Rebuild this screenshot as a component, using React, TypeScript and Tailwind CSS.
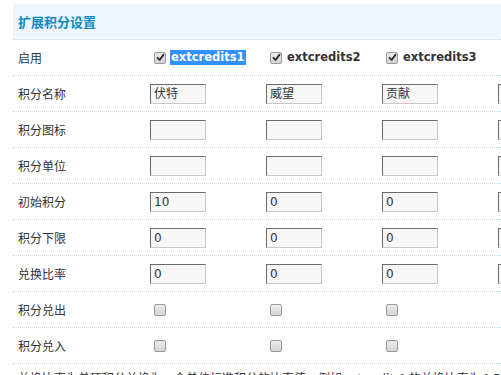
const cjk = "font-['Noto_Sans_CJK_SC','Noto_Sans',sans-serif]";
const latin = "font-['DejaVu_Sans','Noto_Sans_CJK_SC',sans-serif]";

const cols = ['1', '2', '3', '4'];

function Box({ checked }: { checked?: boolean }) {
  return (
    <span className="ml-[4px] mr-[4px] w-[12px] h-[12px] shrink-0 rounded-[2px] border border-[#9a9a9a] bg-gradient-to-b from-[#ececec] to-[#d4d4d4] flex items-center justify-center">
      {checked && (
        <svg width="9" height="9" viewBox="0 0 9 9">
          <path d="M1.5 4.8 L3.6 7 L7.6 1.6" fill="none" stroke="#2b2b2b" strokeWidth="1.8" strokeLinecap="round" strokeLinejoin="round" />
        </svg>
      )}
    </span>
  );
}

function Field({ value = '' }: { value?: string }) {
  return (
    <div
      className={`w-[56px] h-[20px] bg-[#f7f7f7] border border-t-[#6a6a6a] border-l-[#6a6a6a] border-b-[#c9c9c9] border-r-[#c9c9c9] pl-[3px] flex items-center text-[12px] text-[#333] ${latin}`}
    >
      {value}
    </div>
  );
}

const rows: { label: string; values?: string[]; check?: boolean }[] = [
  { label: '积分名称', values: ['伏特', '威望', '贡献', ''] },
  { label: '积分图标', values: ['', '', '', ''] },
  { label: '积分单位', values: ['', '', '', ''] },
  { label: '初始积分', values: ['10', '0', '0', ''] },
  { label: '积分下限', values: ['0', '0', '0', ''] },
  { label: '兑换比率', values: ['0', '0', '0', ''] },
  { label: '积分兑出', check: true },
  { label: '积分兑入', check: true },
];

export default function App() {
  return (
    <div className="w-[501px] h-[375px] overflow-hidden bg-white text-[#333]">
      <div className="ml-[13px] mt-[4px] w-[700px]">
        <div className="h-[36px] bg-[#eef5fc] border-b border-dotted border-[#c6d9e6] pl-[5px] flex items-center">
          <span className={`text-[13px] font-bold text-[#0a8ac4] ${cjk}`}>扩展积分设置</span>
        </div>

        <div className="h-[36px] border-b border-dotted border-[#c6d9e6] flex items-center">
          <div className={`w-[137px] pl-[5px] text-[12px] ${cjk}`}>启用</div>
          {cols.slice(0, 3).map((c, i) => (
            <div key={c} className="w-[116px] flex items-center">
              <Box checked />
              <span
                className={`text-[11.5px] font-bold leading-[15px] px-[1px] ${latin} ${i === 0 ? 'bg-[#3390ff] text-white' : 'text-[#333]'}`}
              >
                extcredits{c}
              </span>
            </div>
          ))}
        </div>

        {rows.map((r) => (
          <div key={r.label} className="h-[36px] border-b border-dotted border-[#c6d9e6] flex items-center">
            <div className={`w-[137px] pl-[5px] text-[12px] ${cjk}`}>{r.label}</div>
            {cols.map((c, i) => (
              <div key={c} className="w-[116px] flex items-center">
                {r.check ? (i < 3 ? <Box /> : null) : <Field value={r.values?.[i]} />}
              </div>
            ))}
          </div>
        ))}

        <div className={`pt-[5px] pl-[5px] text-[12px] whitespace-nowrap ${cjk}`}>
          兑换比率为单项积分兑换为一个单位标准积分的比率值，例如 extcredits1 的兑换比率为 1.5，则兑换时需要按比率计算
        </div>
      </div>
    </div>
  );
}
